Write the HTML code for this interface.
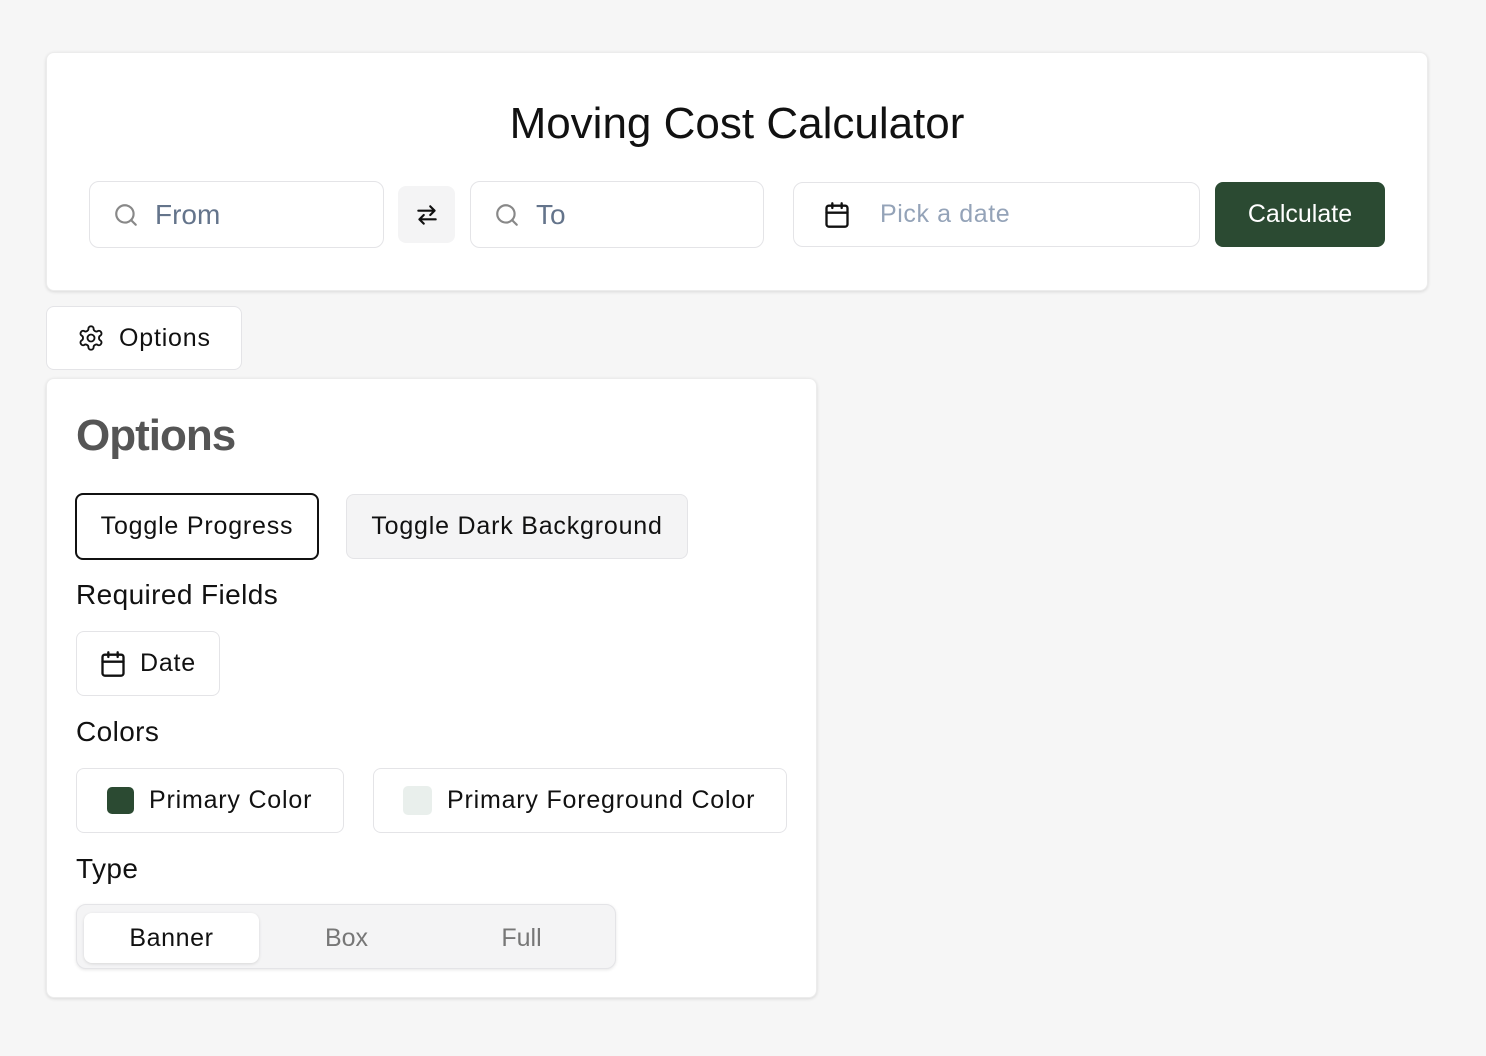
<!DOCTYPE html>
<html><head><style>
*{box-sizing:border-box;margin:0;padding:0}
body{width:1486px;height:1056px;background:#f6f6f6;font-family:"Liberation Sans",sans-serif;position:relative;overflow:hidden;color:#111}
.a{position:absolute}
.card{background:#fff;border-radius:8px;box-shadow:0 1px 3px rgba(0,0,0,.12);border:1px solid #ececec}
.inp{background:#fff;border:1px solid #e4e4e7;border-radius:10px;display:flex;align-items:center}
.btn{background:#fff;border:1px solid #e4e4e7;border-radius:8px;display:flex;align-items:center;font-size:25px;color:#111;letter-spacing:.8px}
svg{fill:none;stroke-linecap:round;stroke-linejoin:round}
</style></head><body>
<div class="a card" style="left:46px;top:52px;width:1382px;height:239px"></div>
<div class="a" style="left:46px;top:99px;width:1382px;text-align:center;font-size:44px;color:#111">Moving Cost Calculator</div>
<div class="a inp" style="left:89px;top:181px;width:295px;height:67px;font-size:28px;color:#64748b">
<svg width="26" height="26" viewBox="0 0 24 24" stroke="#888" stroke-width="2" style="margin:0 16px 0 23px"><circle cx="11" cy="11" r="8"/><path d="M21 21l-4.3-4.3"/></svg>From</div>
<div class="a" style="left:398px;top:186px;width:57px;height:57px;background:#f4f4f5;border-radius:8px;display:flex;align-items:center;justify-content:center">
<svg width="26" height="26" viewBox="0 0 24 24" stroke="#111" stroke-width="2"><path d="M4 8h15M15 4l4 4-4 4M20 16H5M9 12l-4 4 4 4"/></svg></div>
<div class="a inp" style="left:470px;top:181px;width:294px;height:67px;font-size:28px;color:#64748b">
<svg width="26" height="26" viewBox="0 0 24 24" stroke="#888" stroke-width="2" style="margin:0 16px 0 23px"><circle cx="11" cy="11" r="8"/><path d="M21 21l-4.3-4.3"/></svg>To</div>
<div class="a inp" style="left:793px;top:182px;width:407px;height:65px;font-size:25px;color:#94a3b8;letter-spacing:.6px">
<svg width="28" height="28" viewBox="0 0 24 24" stroke="#111" stroke-width="2" style="margin:0 29px 0 29px"><rect x="3" y="4" width="18" height="18" rx="2"/><path d="M16 2v4M8 2v4M3 10h18"/></svg>Pick a date</div>
<div class="a" style="left:1215px;top:182px;width:170px;height:65px;background:#2b4a32;border-radius:8px;color:#fff;font-size:25px;display:flex;align-items:center;justify-content:center">Calculate</div>
<div class="a btn" style="left:46px;top:306px;width:196px;height:64px">
<svg width="28" height="28" viewBox="0 0 24 24" stroke="#111" stroke-width="1.6" style="margin:0 14px 0 30px"><path d="M12.22 2h-.44a2 2 0 0 0-2 2v.18a2 2 0 0 1-1 1.73l-.43.25a2 2 0 0 1-2 0l-.15-.08a2 2 0 0 0-2.730.73l-.22.38a2 2 0 0 0 .73 2.73l.15.1a2 2 0 0 1 1 1.72v.51a2 2 0 0 1-1 1.740l-.15.09a2 2 0 0 0-.73 2.73l.22.38a2 2 0 0 0 2.73.73l.15-.08a2 2 0 0 1 2 0l.43.25a2 2 0 0 1 1 1.73V20a2 2 0 0 0 2 2h.44a2 2 0 0 0 2-2v-.18a2 2 0 0 1 1-1.73l.43-.25a2 2 0 0 1 2 0l.15.08a2 2 0 0 0 2.73-.73l.22-.39a2 2 0 0 0-.73-2.73l-.15-.08a2 2 0 0 1-1-1.74v-.5a2 2 0 0 1 1-1.74l.15-.09a2 2 0 0 0 .73-2.73l-.22-.38a2 2 0 0 0-2.73-.73l-.15.08a2 2 0 0 1-2 0l-.43-.25a2 2 0 0 1-1-1.73V4a2 2 0 0 0-2-2z"/><circle cx="12" cy="12" r="3"/></svg>Options</div>
<div class="a card" style="left:46px;top:378px;width:771px;height:620px"></div>
<div class="a" style="left:76px;top:411px;font-size:44px;font-weight:bold;color:#555;letter-spacing:-1px">Options</div>
<div class="a btn" style="left:75px;top:493px;width:244px;height:67px;border:2px solid #111;justify-content:center">Toggle Progress</div>
<div class="a btn" style="left:346px;top:494px;width:342px;height:65px;background:#f4f4f5;justify-content:center">Toggle Dark Background</div>
<div class="a" style="left:76px;top:579px;font-size:28px;letter-spacing:.4px">Required Fields</div>
<div class="a btn" style="left:76px;top:631px;width:144px;height:65px">
<svg width="28" height="28" viewBox="0 0 24 24" stroke="#111" stroke-width="2" style="margin:0 13px 0 22px"><rect x="3" y="4" width="18" height="18" rx="2"/><path d="M16 2v4M8 2v4M3 10h18"/></svg>Date</div>
<div class="a" style="left:76px;top:716px;font-size:28px;letter-spacing:.4px">Colors</div>
<div class="a btn" style="left:76px;top:768px;width:268px;height:65px"><span style="width:27px;height:27px;background:#2b4a32;border-radius:5px;margin:0 15px 0 30px"></span>Primary Color</div>
<div class="a btn" style="left:373px;top:768px;width:414px;height:65px"><span style="width:29px;height:29px;background:#e9efec;border-radius:5px;margin:0 15px 0 29px"></span>Primary Foreground Color</div>
<div class="a" style="left:76px;top:853px;font-size:28px;letter-spacing:.4px">Type</div>
<div class="a" style="left:76px;top:904px;width:540px;height:65px;background:#f4f4f5;border:1px solid #e4e4e7;border-radius:10px;box-shadow:0 1px 3px rgba(0,0,0,.1)"></div>
<div class="a" style="left:84px;top:913px;width:175px;height:50px;background:#fff;border-radius:8px;box-shadow:0 1px 3px rgba(0,0,0,.12);font-size:25px;display:flex;align-items:center;justify-content:center;letter-spacing:.6px">Banner</div>
<div class="a" style="left:259px;top:913px;width:175px;height:50px;font-size:25px;color:#777;display:flex;align-items:center;justify-content:center">Box</div>
<div class="a" style="left:434px;top:913px;width:175px;height:50px;font-size:25px;color:#777;display:flex;align-items:center;justify-content:center">Full</div>
</body></html>
